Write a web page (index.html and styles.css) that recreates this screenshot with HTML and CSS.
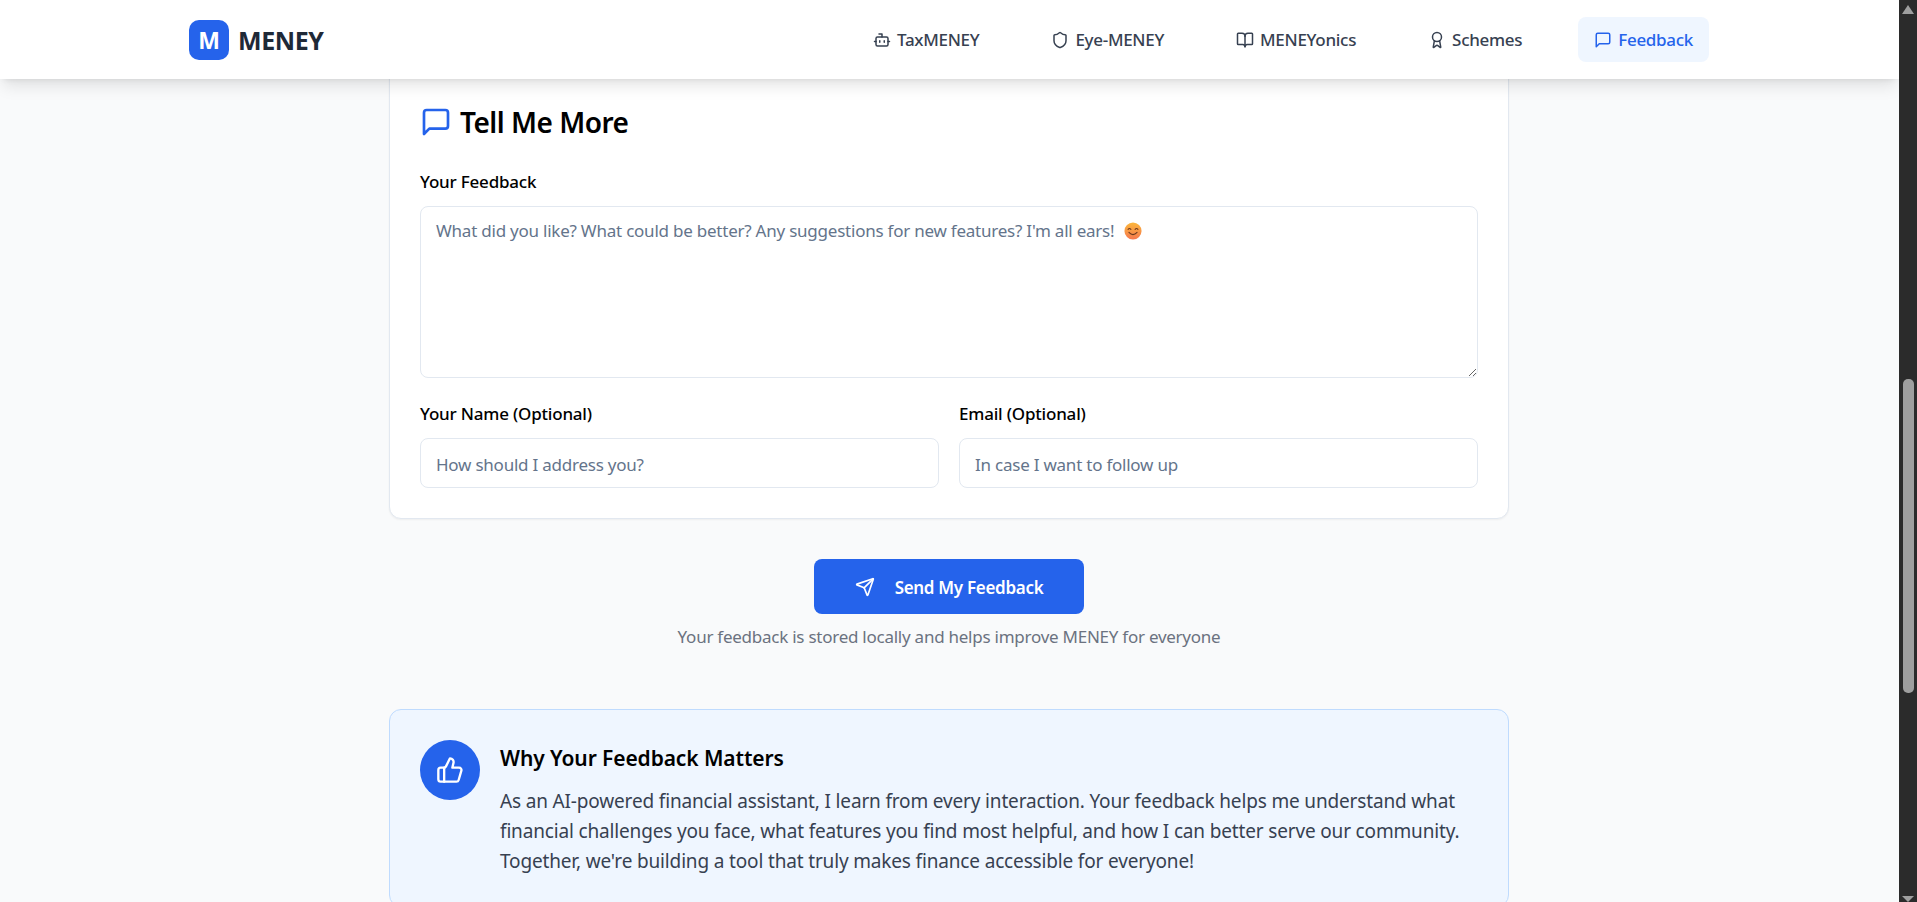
FILE: index.html
```html
<!DOCTYPE html>
<html lang="en">
<head>
    <meta charset="UTF-8">
    <meta name="viewport" content="width=device-width, initial-scale=1.0">
    <title>MENEY - Feedback</title>
    <link rel="stylesheet" href="styles.css">
</head>
<body>
    <div class="page">
        <header class="topbar">
            <div class="topbar-inner">
                <a class="brand">
                    <span class="brand-mark">M</span>
                    <span class="brand-name">MENEY</span>
                </a>
                <nav class="nav">
                    <a class="nav-item">
                        <svg class="nav-icon" viewBox="0 0 24 24"><path d="M12 8V4H8"/><rect width="16" height="12" x="4" y="8" rx="2"/><path d="M2 14h2"/><path d="M20 14h2"/><path d="M15 13v2"/><path d="M9 13v2"/></svg>
                        TaxMENEY
                    </a>
                    <a class="nav-item">
                        <svg class="nav-icon" viewBox="0 0 24 24"><path d="M20 13c0 5-3.5 7.5-7.66 8.95a1 1 0 0 1-.67-.01C7.5 20.5 4 18 4 13V6a1 1 0 0 1 1-1c2 0 4.5-1.2 6.24-2.72a1.17 1.17 0 0 1 1.52 0C14.51 3.81 17 5 19 5a1 1 0 0 1 1 1z"/></svg>
                        Eye-MENEY
                    </a>
                    <a class="nav-item">
                        <svg class="nav-icon" viewBox="0 0 24 24"><path d="M12 7v14"/><path d="M3 18a1 1 0 0 1-1-1V4a1 1 0 0 1 1-1h5a4 4 0 0 1 4 4 4 4 0 0 1 4-4h5a1 1 0 0 1 1 1v13a1 1 0 0 1-1 1h-6a3 3 0 0 0-3 3 3 3 0 0 0-3-3z"/></svg>
                        MENEYonics
                    </a>
                    <a class="nav-item">
                        <svg class="nav-icon" viewBox="0 0 24 24"><path d="m15.477 12.89 1.515 8.526a.5.5 0 0 1-.81.47l-3.58-2.687a1 1 0 0 0-1.197 0l-3.586 2.686a.5.5 0 0 1-.81-.469l1.514-8.526"/><circle cx="12" cy="8" r="6"/></svg>
                        Schemes
                    </a>
                    <a class="nav-item nav-active">
                        <svg class="nav-icon" viewBox="0 0 24 24"><path d="M21 15a2 2 0 0 1-2 2H7l-4 4V5a2 2 0 0 1 2-2h14a2 2 0 0 1 2 2z"/></svg>
                        Feedback
                    </a>
                </nav>
            </div>
        </header>

        <main class="content">
            <section class="card">
                <h2 class="card-title">
                    <svg class="title-icon" viewBox="0 0 24 24"><path d="M21 15a2 2 0 0 1-2 2H7l-4 4V5a2 2 0 0 1 2-2h14a2 2 0 0 1 2 2z"/></svg>
                    Tell Me More
                </h2>
                <label class="field-label">Your Feedback</label>
                <div class="textarea-wrap">
                    <textarea class="field-input field-area" placeholder="What did you like? What could be better? Any suggestions for new features? I'm all ears!"></textarea>
                    <svg class="smile" viewBox="0 0 20 20">
                        <defs>
                            <linearGradient id="smileFill" x1="0" y1="0" x2="0" y2="1">
                                <stop offset="0" stop-color="#fbb73c"/>
                                <stop offset="1" stop-color="#f5784e"/>
                            </linearGradient>
                        </defs>
                        <circle cx="10" cy="10" r="9.5" fill="url(#smileFill)"/>
                        <path d="M4.5 8.2q1.6-1.9 3.2 0M12.3 8.2q1.6-1.9 3.2 0M5.5 11.5q4.5 5 9 0" fill="none" stroke="#6b3a1e" stroke-width="1.2" stroke-linecap="round"/>
                    </svg>
                </div>
                <div class="field-row">
                    <div>
                        <label class="field-label">Your Name (Optional)</label>
                        <input class="field-input field-line" type="text" placeholder="How should I address you?">
                    </div>
                    <div>
                        <label class="field-label">Email (Optional)</label>
                        <input class="field-input field-line" type="text" placeholder="In case I want to follow up">
                    </div>
                </div>
            </section>

            <div class="submit-block">
                <button class="send-btn" type="button">
                    <svg class="send-icon" viewBox="0 0 24 24"><path d="M14.536 21.686a.5.5 0 0 0 .937-.024l6.5-19a.496.496 0 0 0-.635-.635l-19 6.5a.5.5 0 0 0-.024.937l7.93 3.18a2 2 0 0 1 1.112 1.11z"/><path d="m21.854 2.147-10.94 10.939"/></svg>
                    Send My Feedback
                </button>
                <p class="submit-note">Your feedback is stored locally and helps improve MENEY for everyone</p>
            </div>

            <section class="why">
                <div class="why-badge">
                    <svg class="why-icon" viewBox="0 0 24 24"><path d="M7 10v12"/><path d="M15 5.88 14 10h5.83a2 2 0 0 1 1.92 2.56l-2.33 8A2 2 0 0 1 17.5 22H4a2 2 0 0 1-2-2v-8a2 2 0 0 1 2-2h2.76a2 2 0 0 0 1.79-1.11L12 2a3.13 3.13 0 0 1 3 3.88Z"/></svg>
                </div>
                <div>
                    <h3 class="why-title">Why Your Feedback Matters</h3>
                    <p class="why-text">As an AI-powered financial assistant, I learn from every interaction. Your feedback helps me understand what financial challenges you face, what features you find most helpful, and how I can better serve our community. Together, we're building a tool that truly makes finance accessible for everyone!</p>
                </div>
            </section>
        </main>
    </div>

    <aside class="scrollbar">
        <svg class="scroll-arrow" viewBox="0 0 18 14"><polygon points="9,5 15,14 3,14"/></svg>
        <div class="scroll-thumb"></div>
        <svg class="scroll-arrow scroll-arrow-down" viewBox="0 0 18 6"><polygon points="3,0 15,0 9,6"/></svg>
    </aside>
</body>
</html>
```

FILE: styles.css
```css
* {
    box-sizing: border-box;
}

html, body {
    height: 100%;
}

body {
    font-family: "Noto Sans", Arial, sans-serif;
    margin: 0;
    padding: 0;
    display: flex;
    overflow: hidden;
    background-color: #f9fafb;
    color: #000;
}

.page {
    flex: 1;
    min-width: 0;
    height: 902px;
    overflow: hidden;
}

/* top bar */
.topbar {
    position: relative;
    z-index: 2;
    height: 79px;
    background-color: #fff;
    box-shadow: 0 10px 15px -3px rgba(0, 0, 0, 0.1), 0 4px 6px -4px rgba(0, 0, 0, 0.1);
}

.topbar-inner {
    width: 1520px;
    height: 100%;
    margin: 0 0 0 189px;
    display: flex;
    align-items: center;
    justify-content: space-between;
}

.brand {
    display: flex;
    align-items: center;
    gap: 9px;
}

.brand-mark {
    width: 40px;
    height: 40px;
    border-radius: 10px;
    background-color: #2563eb;
    color: #fff;
    font-size: 23px;
    font-weight: 700;
    display: flex;
    align-items: center;
    justify-content: center;
}

.brand-name {
    font-size: 25px;
    font-weight: 700;
    color: #1f2937;
    letter-spacing: -0.4px;
}

.nav {
    display: flex;
    align-items: center;
    gap: 40px;
}

.nav-item {
    height: 45px;
    padding: 0 16px;
    border-radius: 8px;
    display: flex;
    align-items: center;
    gap: 6px;
    font-size: 17px;
    font-weight: 500;
    color: #374151;
    letter-spacing: -0.3px;
}

.nav-active {
    background-color: #eff6ff;
    color: #2563eb;
}

.nav-icon, .title-icon, .send-icon, .why-icon {
    fill: none;
    stroke: currentColor;
    stroke-width: 2;
    stroke-linecap: round;
    stroke-linejoin: round;
}

.nav-icon {
    width: 18px;
    height: 18px;
    flex: none;
}

/* form card */
.content {
    width: 1120px;
    margin: -20px 0 0 389px;
}

.card {
    height: 460px;
    padding: 47px 30px 0;
    background-color: #fff;
    border: 1px solid #e2e8f0;
    border-radius: 12px;
    box-shadow: 0 1px 2px rgba(0, 0, 0, 0.05);
}

.card-title {
    margin: 0 0 33px;
    height: 30px;
    display: flex;
    align-items: center;
    gap: 8px;
    font-size: 28px;
    font-weight: 600;
    letter-spacing: -0.5px;
}

.title-icon {
    width: 32px;
    height: 32px;
    color: #2563eb;
}

.field-label {
    display: block;
    height: 24px;
    margin-bottom: 12px;
    font-size: 17px;
    line-height: 24px;
    font-weight: 500;
    letter-spacing: -0.2px;
}

.field-input {
    display: block;
    width: 100%;
    height: 50px;
    padding: 0 15px;
    background-color: #fff;
    border: 1px solid #e2e8f0;
    border-radius: 8px;
    font-family: inherit;
    font-size: 17px;
    letter-spacing: -0.23px;
    color: #111827;
}

.field-input::placeholder {
    color: #64748b;
    opacity: 1;
}

.field-line {
    padding-top: 2px;
}

.textarea-wrap {
    position: relative;
}

.field-area {
    height: 172px;
    padding-top: 12px;
    line-height: 24px;
    resize: vertical;
}

.smile {
    position: absolute;
    left: 704px;
    top: 16px;
    width: 18px;
    height: 18px;
}

.field-row {
    margin-top: 24px;
    display: grid;
    grid-template-columns: 1fr 1fr;
    gap: 20px;
}

/* submit */
.submit-block {
    margin-top: 40px;
    text-align: center;
}

.send-btn {
    width: 270px;
    height: 55px;
    padding: 1px 0 0;
    border: 0;
    border-radius: 8px;
    background-color: #2563eb;
    color: #fff;
    font-family: inherit;
    font-size: 17px;
    font-weight: 600;
    letter-spacing: -0.3px;
    display: inline-flex;
    align-items: center;
    justify-content: center;
    gap: 20px;
}

.send-icon {
    width: 20px;
    height: 20px;
}

.submit-note {
    margin: 11px 0 0;
    font-size: 17px;
    line-height: 24px;
    color: #6b7280;
    letter-spacing: -0.25px;
}

/* why box */
.why {
    margin-top: 60px;
    padding: 30px;
    display: flex;
    gap: 20px;
    background-color: #eff6ff;
    border: 1px solid #bfdbfe;
    border-radius: 12px;
}

.why-badge {
    width: 60px;
    height: 60px;
    flex: none;
    border-radius: 50%;
    background-color: #2563eb;
    color: #fff;
    display: flex;
    align-items: center;
    justify-content: center;
}

.why-icon {
    width: 28px;
    height: 28px;
}

.why-title {
    margin: 3px 0 13px;
    font-size: 21px;
    line-height: 30px;
    font-weight: 600;
    letter-spacing: -0.1px;
}

.why-text {
    margin: 0;
    font-size: 19px;
    line-height: 30px;
    color: #374151;
    letter-spacing: -0.16px;
}

/* window scrollbar */
.scrollbar {
    width: 18px;
    height: 902px;
    flex: none;
    background-color: #2b2b2b;
    display: flex;
    flex-direction: column;
    align-items: center;
}

.scroll-arrow {
    width: 18px;
    height: 14px;
    flex: none;
    fill: #9f9f9f;
}

.scroll-arrow-down {
    margin-top: auto;
    height: 6px;
}

.scroll-thumb {
    width: 11px;
    height: 314px;
    margin-top: 365px;
    border-radius: 5px;
    background-color: #9f9f9f;
}
```
